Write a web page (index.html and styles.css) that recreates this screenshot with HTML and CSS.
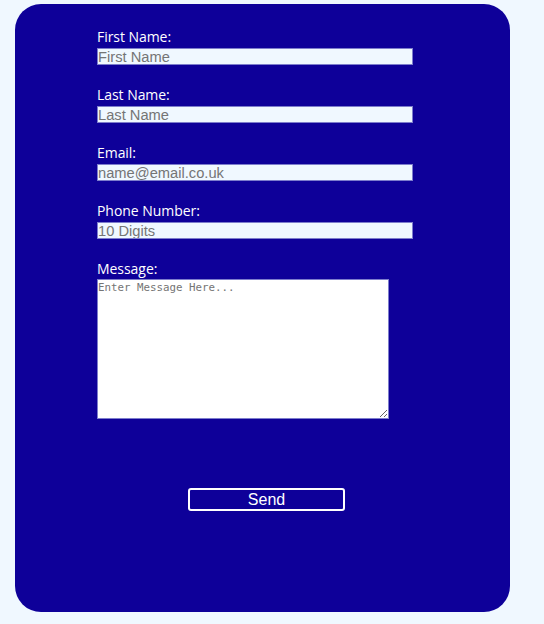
FILE: index.html
```html
<!DOCTYPE html>
<html>
<head>
<meta charset="utf-8">
<link rel="stylesheet" href="styles.css">
</head>
<body>
<div class="card">
  <form class="form">
    <div class="field">
      <label class="label" for="fn">First Name:</label>
      <input class="input" id="fn" type="text" placeholder="First Name">
    </div>
    <div class="field">
      <label class="label" for="ln">Last Name:</label>
      <input class="input" id="ln" type="text" placeholder="Last Name">
    </div>
    <div class="field">
      <label class="label" for="em">Email:</label>
      <input class="input" id="em" type="text" placeholder="name@email.co.uk">
    </div>
    <div class="field">
      <label class="label" for="ph">Phone Number:</label>
      <input class="input" id="ph" type="text" placeholder="10 Digits">
    </div>
    <div class="field">
      <label class="label" for="msg">Message:</label>
      <textarea class="textarea" id="msg" placeholder="Enter Message Here..."></textarea>
    </div>
    <button class="send" type="button">Send</button>
  </form>
</div>
</body>
</html>
```
FILE: styles.css
```css
html, body {
  margin: 0;
  padding: 0;
  background: #f0f8ff;
}
body {
  padding: 4px 0 0 15px;
}
.card {
  box-sizing: border-box;
  width: 495px;
  height: 608px;
  background: #0e0099;
  border-radius: 26px;
  padding: 23px 0 0 82px;
}
.form {
  display: flex;
  flex-direction: column;
  align-items: flex-start;
}
.field {
  display: flex;
  flex-direction: column;
  margin-bottom: 20px;
}
.label {
  font-family: "Open Sans", sans-serif;
  font-size: 14px;
  line-height: 19px;
  margin-bottom: 2px;
  color: #ffffff;
  letter-spacing: -0.05px;
}
.input {
  box-sizing: border-box;
  width: 316px;
  height: 17px;
  margin: 0;
  padding: 0;
  border: 1px solid #7d7dcc;
  background: #f0f8ff;
  font-family: "Liberation Sans", Arial, sans-serif;
  font-size: 14.7px;
  line-height: 15px;
  color: #000;
}
.input::placeholder {
  color: #757575;
}
.textarea {
  box-sizing: border-box;
  width: 292px;
  height: 140px;
  margin: -1px 0 0 0;
  padding: 1px 0;
  border: 1px solid #7d7dcc;
  background: #ffffff;
  font-family: "DejaVu Sans Mono", "Liberation Mono", monospace;
  font-size: 10.8px;
  line-height: 13px;
}
.textarea::placeholder {
  color: #757575;
}
.send {
  box-sizing: border-box;
  margin: 49px 0 0 91px;
  width: 157px;
  height: 23px;
  padding: 0;
  background: transparent;
  border: 2px solid #ffffff;
  border-radius: 3px;
  color: #ffffff;
  font-family: "Liberation Sans", Arial, sans-serif;
  font-size: 16px;
  line-height: 19px;
}
```
